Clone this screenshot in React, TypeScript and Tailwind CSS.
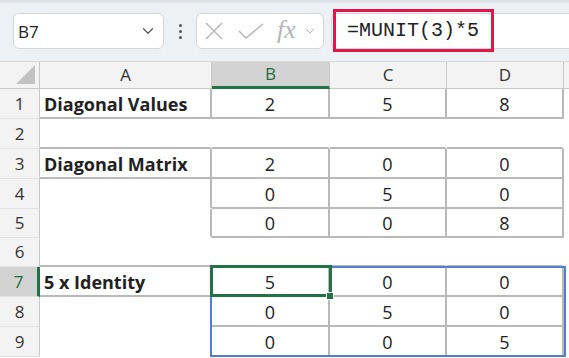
import React from 'react';
import { ChevronDown } from 'lucide-react';

type Row = {
  n: number;
  h: string;
  label?: string;
  vals?: string[];
  aRight?: boolean;
  aBottom?: boolean;
  dRight?: boolean;
  dBottom?: boolean;
};

const rows: Row[] = [
  { n: 1, h: 'h-[30px]', label: 'Diagonal Values', vals: ['2', '5', '8'], aRight: true, aBottom: true, dRight: true, dBottom: true },
  { n: 2, h: 'h-[30px]', aBottom: true, dBottom: true },
  { n: 3, h: 'h-[30px]', label: 'Diagonal Matrix', vals: ['2', '0', '0'], aRight: true, aBottom: true, dRight: true, dBottom: true },
  { n: 4, h: 'h-[30px]', vals: ['0', '5', '0'], aRight: true, dRight: true, dBottom: true },
  { n: 5, h: 'h-[29px]', vals: ['0', '0', '8'], aRight: true, dRight: true, dBottom: true },
  { n: 6, h: 'h-[29px]', aBottom: true, dBottom: true },
  { n: 7, h: 'h-[30px]', label: '5 x Identity', vals: ['5', '0', '0'], aRight: true, aBottom: true, dRight: true, dBottom: true },
  { n: 8, h: 'h-[30px]', vals: ['0', '5', '0'], aRight: true, dRight: true, dBottom: true },
  { n: 9, h: 'h-[30px]', vals: ['0', '0', '5'], aRight: true, dRight: true, dBottom: true },
];

const widths = ['w-[118px]', 'w-[117px]', 'w-[117px]'];

export default function App() {
  return (
    <div className="w-[569px] h-[358px] overflow-hidden bg-white font-['Open_Sans',sans-serif] text-[#222]">
      {/* formula bar */}
      <div className="relative h-[61px] bg-[#eef1f4] border-t-[3px] border-[#dfe2e6] flex items-start pt-[10px]">
        <div className="ml-[13px] w-[151px] h-[36px] bg-white border border-[#d4d6d9] rounded-[6px] flex items-center justify-between pl-[4px] pr-[6px]">
          <span className="text-[17px] leading-none">B7</span>
          <ChevronDown size={18} strokeWidth={1.6} className="text-[#555]" />
        </div>
        <div className="w-[32px] h-[36px] flex flex-col items-center justify-center gap-[3px]">
          <div className="w-[3px] h-[3px] rounded-full bg-[#555]" />
          <div className="w-[3px] h-[3px] rounded-full bg-[#555]" />
          <div className="w-[3px] h-[3px] rounded-full bg-[#555]" />
        </div>
        <div className="w-[128px] h-[36px] bg-white border border-[#d4d6d9] rounded-[6px] flex items-center pl-[8px] text-[#b4b4b4]">
          <svg width="18" height="18" viewBox="0 0 18 18" fill="none" stroke="currentColor" strokeWidth="1.4">
            <path d="M1 1L17 17M17 1L1 17" />
          </svg>
          <svg width="26" height="16" viewBox="0 0 26 16" fill="none" stroke="currentColor" strokeWidth="1.4" className="ml-[15px]">
            <path d="M1 8L8 15L25 1" />
          </svg>
          <span className="ml-[13px] font-['Liberation_Serif',serif] italic text-[26px] leading-none -mt-[3px]">fx</span>
          <ChevronDown size={16} strokeWidth={1.5} className="ml-[6px]" />
        </div>
        <div className="ml-[7px] flex-1 h-[36px] bg-white border border-r-0 border-[#d4d6d9] rounded-l-[6px] flex items-center pl-[15px]">
          <span className="font-['Liberation_Mono',monospace] text-[20px] leading-none text-[#222]">=MUNIT(3)*5</span>
        </div>
        <div className="absolute left-[333px] top-[6px] w-[161px] h-[43px] border-[3px] border-[#e0174b]" />
      </div>

      {/* column headers */}
      <div className="flex h-[28px] bg-[#f3f3f3] border-t border-[#d9d9d9] text-[17px] text-[#333]">
        <div className="relative w-[40px] border-r border-b border-[#c8c8c8]">
          <div className="absolute right-[4px] bottom-[4px] w-0 h-0 border-l-[19px] border-l-transparent border-b-[19px] border-b-[#c2c2c2]" />
        </div>
        <div className="w-[172px] flex items-center justify-center border-r border-b border-[#c8c8c8]">A</div>
        <div className="w-[118px] flex items-center justify-center bg-[#d3d3d3] text-[#1d6b40] border-r border-[#c8c8c8] border-b-[3px] border-b-[#217346]">B</div>
        <div className="w-[117px] flex items-center justify-center border-r border-b border-[#c8c8c8]">C</div>
        <div className="w-[117px] flex items-center justify-center border-r border-b border-[#c8c8c8]">D</div>
        <div className="flex-1 border-b border-[#c8c8c8]" />
      </div>

      {/* grid body */}
      <div className="relative">
        {rows.map((r) => (
          <div key={r.n} className={`flex ${r.h}`}>
            <div
              className={`w-[40px] flex items-center justify-center text-[17px] border-b border-[#e2e2e2] ${
                r.n === 7
                  ? 'bg-[#d3d3d3] text-[#1d6b40] border-r-[3px] border-r-[#217346]'
                  : 'bg-[#f3f3f3] text-[#333] border-r border-r-[#c8c8c8]'
              }`}
            >
              {r.n}
            </div>
            <div
              className={`w-[172px] flex items-center pl-[4px] pt-[2px] text-[18px] font-bold border-[#b9b9b9] ${r.aRight ? 'border-r-2' : 'border-r-2 border-r-transparent'} ${
                r.aBottom ? 'border-b-2' : 'border-b-2 border-b-transparent'
              }`}
            >
              {r.label}
            </div>
            {widths.map((w, i) => (
              <div
                key={i}
                className={`${w} flex items-center justify-center pt-[2px] text-[18px] border-[#b9b9b9] ${r.dRight ? 'border-r-2' : 'border-r-2 border-r-transparent'} ${
                  r.dBottom ? 'border-b-2' : 'border-b-2 border-b-transparent'
                }`}
              >
                {r.vals ? r.vals[i] : ''}
              </div>
            ))}
            <div className="flex-1" />
          </div>
        ))}

        {/* selection range B7:D9 */}
        <div className="absolute left-[210px] top-[177px] w-[356px] h-[91px] border-2 border-[#4f7fd0]" />
        {/* active cell B7 */}
        <div className="absolute left-[210px] top-[176px] w-[122px] h-[32px] border-[3px] border-[#217346]" />
        <div className="absolute left-[326px] top-[203px] w-[8px] h-[8px] bg-[#217346] border border-white" />
      </div>
    </div>
  );
}
